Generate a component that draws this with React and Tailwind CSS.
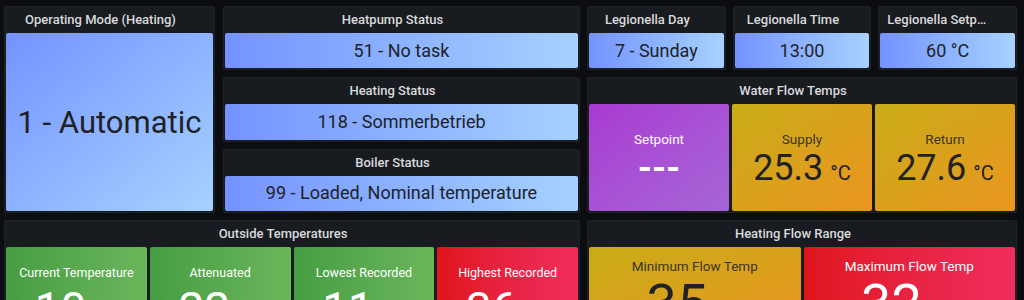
import React from "react";

const FONT = "font-['Roboto','Liberation_Sans',sans-serif]";

function Panel({ title, className = "", bodyClass = "", children }) {
  return (
    <div className={`flex min-w-0 flex-col rounded-[2px] border border-[#1f2125] bg-[#181b1f] ${className}`}>
      <div className="flex h-[26px] shrink-0 items-center pl-2 pr-[26px]">
        <div className="w-full truncate text-center text-[13px] font-medium leading-[16px] text-[#d8d9dc]">{title}</div>
      </div>
      <div className={`flex min-h-0 flex-1 px-[1px] pb-[1px] ${bodyClass}`}>{children}</div>
    </div>
  );
}

function BlueBox({ children, size = "text-[18px]", dir = "bg-linear-to-r" }) {
  return (
    <div className={`flex flex-1 items-center justify-center rounded-[2px] ${dir} from-[#7592ff] to-[#a7d2ff] ${size} leading-none text-[#202226]`}>
      {children}
    </div>
  );
}

function Tile({ color, label, value, unit, dark, labelClass = "text-[13.5px]", valueClass = "", unitClass = "", wrapClass = "justify-center" }) {
  return (
    <div className={`flex min-w-0 flex-1 flex-col items-center rounded-[2px] ${color} ${wrapClass}`}>
      <div className={`leading-[18px] ${dark ? "text-[#3a3526]" : "text-white"} ${labelClass}`}>{label}</div>
      <div className={`flex items-baseline leading-none ${dark ? "text-[#202226]" : "text-white"} ${valueClass}`}>
        <span>{value}</span>
        {unit && <span className={`ml-[7px] ${unitClass}`}>{unit}</span>}
      </div>
    </div>
  );
}

const YELLOW = "bg-linear-to-br from-[#c8ac18] to-[#ea951f]";
const PURPLE = "bg-linear-to-br from-[#a93ad2] to-[#a565d6]";
const GREEN = "bg-linear-to-r from-[#479d43] to-[#6ab65b]";
const RED = "bg-linear-to-r from-[#e0151b] to-[#ef2d5c]";

export default function App() {
  return (
    <div className={`h-[300px] overflow-hidden bg-[#0c0d10] pl-[4px] pt-[6px] ${FONT}`}>
      <div className="flex h-[207px] w-[1013px]">
        <Panel title="Operating Mode (Heating)" className="w-[211px]">
          <BlueBox size="text-[31px]" dir="bg-linear-to-br">1 - Automatic</BlueBox>
        </Panel>
        <div className="ml-[8px] flex w-[357px] flex-col gap-[7px]">
          <Panel title="Heatpump Status" className="flex-1">
            <BlueBox>51 - No task</BlueBox>
          </Panel>
          <Panel title="Heating Status" className="flex-1">
            <BlueBox>118 - Sommerbetrieb</BlueBox>
          </Panel>
          <Panel title="Boiler Status" className="flex-1">
            <BlueBox>99 - Loaded, Nominal temperature</BlueBox>
          </Panel>
        </div>
        <div className="ml-[7px] flex w-[430px] flex-col gap-[7px]">
          <div className="flex h-[64px] gap-[7px]">
            <Panel title="Legionella Day" className="flex-1">
              <BlueBox>7 - Sunday</BlueBox>
            </Panel>
            <Panel title="Legionella Time" className="flex-1">
              <BlueBox>13:00</BlueBox>
            </Panel>
            <Panel title="Legionella Setpoint" className="flex-1">
              <BlueBox>60 °C</BlueBox>
            </Panel>
          </div>
          <Panel title="Water Flow Temps" className="flex-1" bodyClass="gap-[3px]">
            <Tile color={PURPLE} label="Setpoint" value="---" valueClass="mt-[2px] text-[36px] font-bold" />
            <Tile color={YELLOW} dark label="Supply" value="25.3" unit="°C" valueClass="mt-[2px] text-[36px]" unitClass="text-[20px]" />
            <Tile color={YELLOW} dark label="Return" value="27.6" unit="°C" valueClass="mt-[2px] text-[36px]" unitClass="text-[20px]" />
          </Panel>
        </div>
      </div>
      <div className="mt-[7px] flex h-[120px] w-[1013px]">
        <Panel title="Outside Temperatures" className="w-[576px]" bodyClass="gap-[3px]">
          <Tile color={GREEN} wrapClass="justify-start pt-[17px]" label="Current Temperature" labelClass="text-[12.5px]" value="10" unit="°C" valueClass="mt-[4px] text-[46px]" unitClass="text-[24px]" />
          <Tile color={GREEN} wrapClass="justify-start pt-[17px]" label="Attenuated" labelClass="text-[12.5px]" value="22" unit="°C" valueClass="mt-[4px] text-[46px]" unitClass="text-[24px]" />
          <Tile color={GREEN} wrapClass="justify-start pt-[17px]" label="Lowest Recorded" labelClass="text-[12.5px]" value="11" unit="°C" valueClass="mt-[4px] text-[46px]" unitClass="text-[24px]" />
          <Tile color={RED} wrapClass="justify-start pt-[17px]" label="Highest Recorded" labelClass="text-[12.5px]" value="36" unit="°C" valueClass="mt-[4px] text-[46px]" unitClass="text-[24px]" />
        </Panel>
        <Panel title="Heating Flow Range" className="ml-[7px] w-[430px]" bodyClass="gap-[3px]">
          <Tile color={YELLOW} dark wrapClass="justify-start pt-[10px]" label="Minimum Flow Temp" labelClass="text-[13.5px]" value="35" unit="°C" valueClass="mt-[2px] text-[54px]" unitClass="text-[28px]" />
          <Tile color={RED} wrapClass="justify-start pt-[10px]" label="Maximum Flow Temp" labelClass="text-[13.5px]" value="32" unit="°C" valueClass="mt-[2px] text-[54px]" unitClass="text-[28px]" />
        </Panel>
      </div>
    </div>
  );
}
